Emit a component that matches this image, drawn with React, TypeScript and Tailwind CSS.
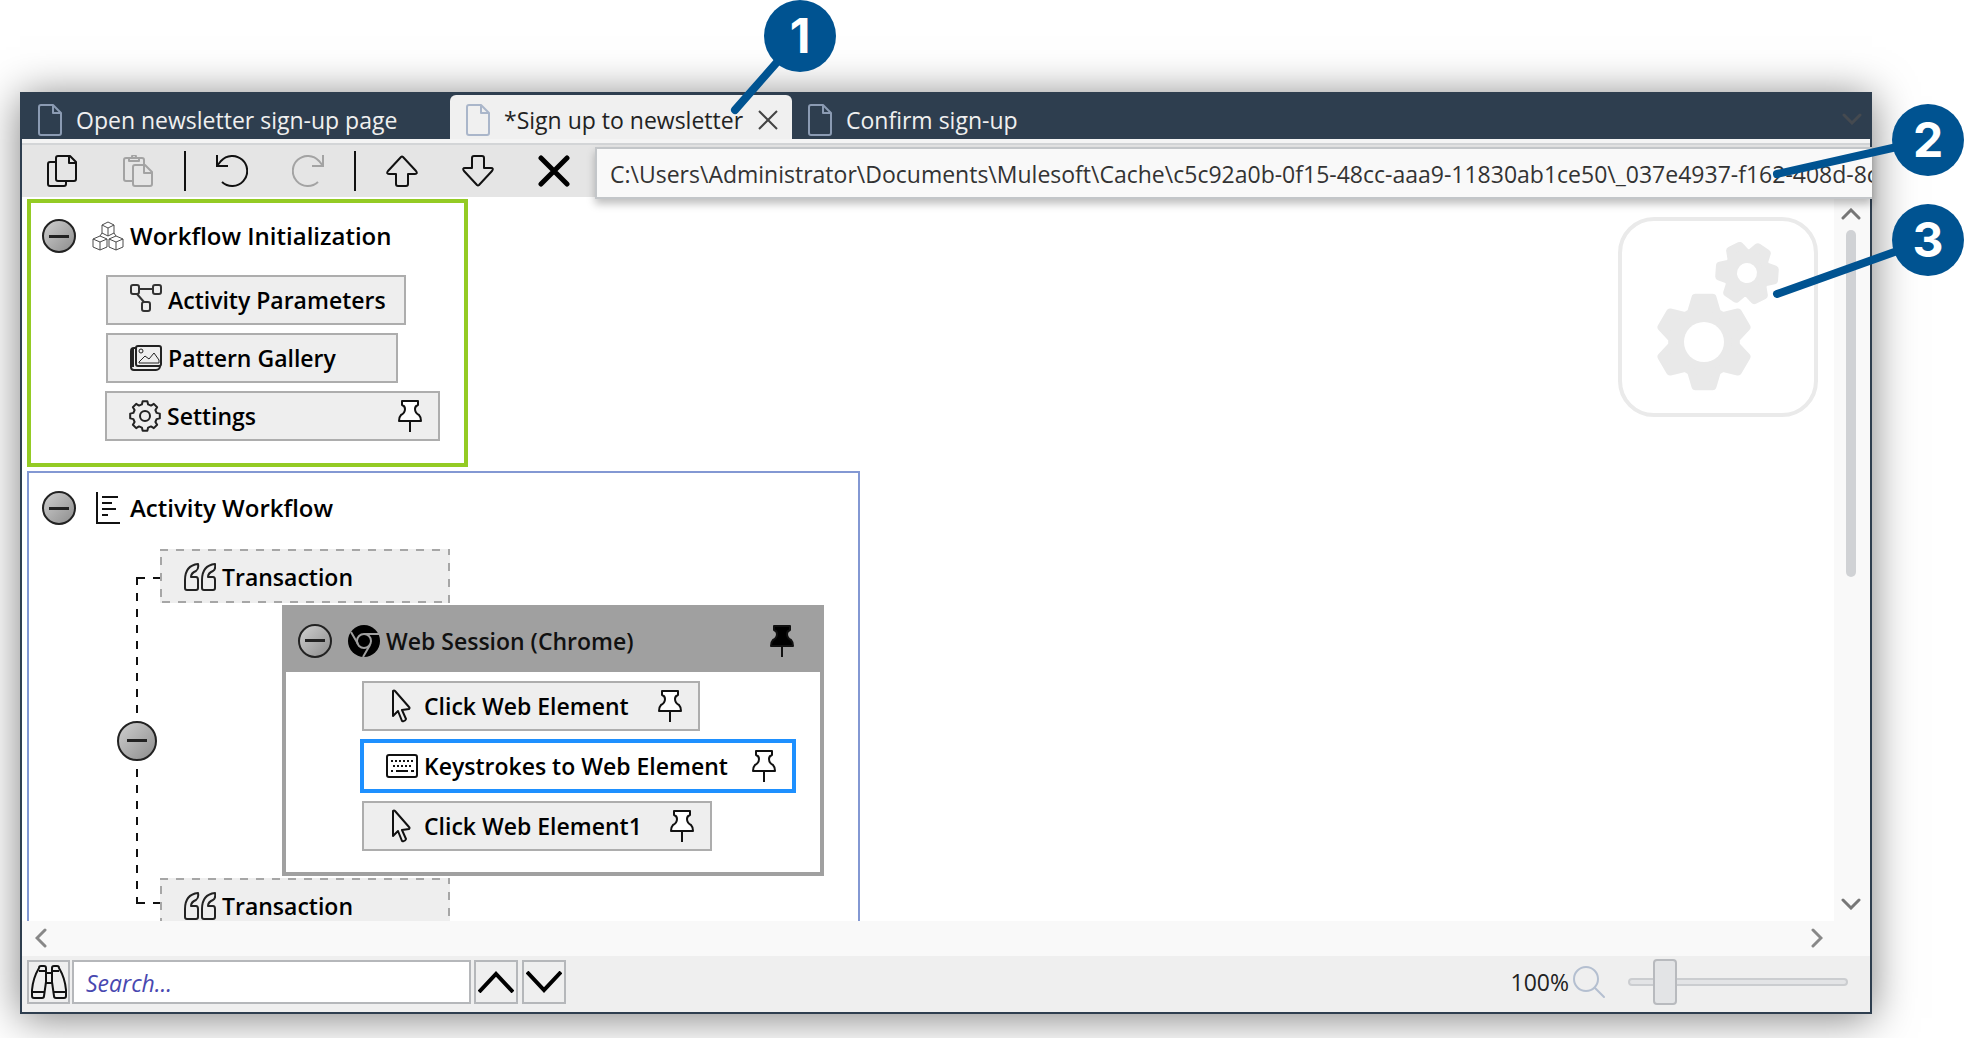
import {FC, ReactNode, useState} from 'react';

type IconProps = {className?: string};

type TabProps = {
  title: string;
  active?: boolean;
};

type StepProps = {
  label: string;
  icon: ReactNode;
  className?: string;
  pinned?: boolean;
  selected?: boolean;
};

// builds a closed gear outline around 0,0
const gearPath = (teeth: number, outer: number, inner: number, top: number, base: number) => {
  const points: string[] = [];
  for (let i = 0; i < teeth; i++) {
    const angle = (360 / teeth) * i - 90;
    [
      [angle - base, inner],
      [angle - top, outer],
      [angle + top, outer],
      [angle + base, inner],
    ].forEach(([deg, r]) => {
      const rad = (deg * Math.PI) / 180;
      points.push(`${(r * Math.cos(rad)).toFixed(2)} ${(r * Math.sin(rad)).toFixed(2)}`);
    });
  }
  return `M${points.join('L')}Z`;
};

const DocIcon: FC<IconProps> = ({className}) => (
  <svg viewBox="0 0 24 32" fill="none" strokeWidth="2" strokeLinejoin="round" className={`h-8 w-6 shrink-0 ${className}`}>
    <path d="M3 1h12l8 8v20a2 2 0 0 1-2 2H3a2 2 0 0 1-2-2V3a2 2 0 0 1 2-2zM15 1v8h8" />
  </svg>
);

const CopyIcon: FC = () => (
  <svg viewBox="0 0 30 32" fill="none" stroke="#111" strokeWidth="2" strokeLinejoin="round" className="h-8 w-[30px]">
    <path d="M9 7H3a2 2 0 0 0-2 2v20a2 2 0 0 0 2 2h14a2 2 0 0 0 2-2v-3" />
    <path d="M11 1h12l6 6v17a2 2 0 0 1-2 2H11a2 2 0 0 1-2-2V3a2 2 0 0 1 2-2zM22 1v7h7" />
  </svg>
);

const PasteIcon: FC = () => (
  <svg viewBox="0 0 30 32" fill="none" stroke="#a3a3a3" strokeWidth="2" strokeLinejoin="round" className="h-8 w-[30px]">
    <path d="M9 26H3a2 2 0 0 1-2-2V5a2 2 0 0 1 2-2h16a2 2 0 0 1 2 2v4" />
    <path d="M6 3v3h10V3M9 2a2 2 0 0 1 4 0" />
    <path d="M12 10h10l7 7v12a2 2 0 0 1-2 2H12a2 2 0 0 1-2-2V12a2 2 0 0 1 2-2zM21 10v8h8" />
  </svg>
);

const UndoIcon: FC<IconProps> = ({className}) => (
  <svg viewBox="0 0 32 32" fill="none" strokeWidth="2" className={`size-8 ${className}`}>
    <path d="M1 0v11h11M1 11L5 6A15 15 0 1 1 6 27" />
  </svg>
);

const ArrowIcon: FC<IconProps> = ({className}) => (
  <svg viewBox="0 0 32 32" fill="none" stroke="#111" strokeWidth="2" strokeLinejoin="round" className={`size-8 ${className}`}>
    <path d="M15 2q1-1 2 0l13 14q2 3-1 3h-7v10q0 2-2 2h-8q-2 0-2-2V19H3q-3 0-1-3z" />
  </svg>
);

const DeleteIcon: FC = () => (
  <svg viewBox="0 0 32 32" stroke="#000" strokeWidth="5" strokeLinecap="round" className="size-8">
    <path d="M3 3l26 26M29 3L3 29" />
  </svg>
);

const ChevronIcon: FC<IconProps> = ({className}) => (
  <svg viewBox="0 0 20 12" fill="none" strokeWidth="3" strokeLinecap="round" className={`h-3 w-5 ${className}`}>
    <path d="M2 2l8 8 8-8" />
  </svg>
);

const CubesIcon: FC = () => (
  <svg viewBox="0 0 32 30" fill="none" stroke="#4b4b4b" strokeWidth="1" strokeLinejoin="round" className="h-[30px] w-8">
    <path d="M10 4l6-3 6 3v8l-6 3-6-3zM10 4l6 3 6-3M16 7v8" />
    <path d="M1 18l7-3 7 3v8l-7 3-7-3zM1 18l7 3 7-3M8 21v8" />
    <path d="M17 18l7-3 7 3v8l-7 3-7-3zM17 18l7 3 7-3M24 21v8" />
    <path d="M10 12l-2 3M22 12l2 3" />
  </svg>
);

const NodesIcon: FC = () => (
  <svg viewBox="0 0 32 32" fill="none" stroke="#333" strokeWidth="2" className="size-8">
    <rect x="1" y="1" width="8" height="9" rx="2" />
    <rect x="23" y="1" width="8" height="9" rx="2" />
    <rect x="12" y="18" width="8" height="9" rx="2" />
    <path d="M9 5h14M7 10l7 8" />
  </svg>
);

const GalleryIcon: FC = () => (
  <svg viewBox="0 0 32 26" fill="none" stroke="#222" strokeWidth="2" strokeLinejoin="round" className="h-[26px] w-8">
    <rect x="6" y="1" width="25" height="20" rx="2" />
    <path d="M6 3H4a3 3 0 0 0-3 3v16a3 3 0 0 0 3 3h22a4 4 0 0 0 4-4M3 4v18" />
    <path d="M9 17l6-6 4 3 5-6 5 7v3H9z" strokeWidth="1" />
    <circle cx="11" cy="6" r="2" strokeWidth="1" />
  </svg>
);

const SettingsIcon: FC = () => (
  <svg viewBox="-16 -17 32 34" fill="none" stroke="#222" strokeWidth="2" strokeLinejoin="round" className="h-[34px] w-8">
    <path d={gearPath(8, 15, 12, 9, 15)} />
    <circle r="5" />
  </svg>
);

const WorkflowIcon: FC = () => (
  <svg viewBox="0 0 24 32" fill="none" stroke="#111" strokeWidth="2" className="h-8 w-6">
    <path d="M1 0v31h23M6 5h16M6 11h10M6 17h14M6 23h6" />
  </svg>
);

const QuoteIcon: FC = () => (
  <svg viewBox="0 0 32 28" fill="none" stroke="#222" strokeWidth="2" strokeLinejoin="round" className="h-7 w-8">
    <path d="M14 1C5 2 1 8 1 17v8q0 2 2 2h9q2 0 2-2v-8q0-3-2-3H7q0-4 5-6 3-2 2-7z" />
    <path d="M31 1c-9 1-13 7-13 16v8q0 2 2 2h9q2 0 2-2v-8q0-3-2-3h-5q0-4 5-6 3-2 2-7z" />
  </svg>
);

const ChromeIcon: FC = () => (
  <svg viewBox="0 0 32 32" fill="none" stroke="#a0a0a0" strokeWidth="2" className="size-8">
    <circle cx="16" cy="16" r="16" fill="#000" stroke="none" />
    <circle cx="16" cy="16" r="7" />
    <path d="M16 9h15M10 19L3 7M22 20l-7 12" />
  </svg>
);

const CursorIcon: FC = () => (
  <svg viewBox="0 0 22 34" fill="none" stroke="#111" strokeWidth="2" strokeLinejoin="round" className="h-[34px] w-[22px]">
    <path d="M2 2v25l5-5 4 10q3 1 4-2l-4-9 7-1q1-1 0-2L4 2q-1-1-2 0z" />
  </svg>
);

const KeyboardIcon: FC = () => (
  <svg viewBox="0 0 32 24" fill="none" stroke="#111" strokeWidth="2" className="h-6 w-8">
    <rect x="1" y="1" width="30" height="22" rx="2" />
    <path d="M5 7h23M7 12h20" strokeDasharray="2 2" />
    <path d="M5 17h2M10 17h12M25 17h3" />
  </svg>
);

const PinIcon: FC<{filled?: boolean}> = ({filled}) => (
  <svg viewBox="0 0 24 32" fill={filled ? '#000' : '#fff'} stroke="#111" strokeWidth="2" strokeLinejoin="round" className="h-8 w-6">
    <path d="M4 1h16v4q-3 1-3 4 0 4 4 6 2 2 2 6H1q0-4 2-6 4-2 4-6 0-3-3-4zM12 21v11" />
  </svg>
);

const BinocularsIcon: FC = () => (
  <svg viewBox="0 0 36 36" fill="none" stroke="#111" strokeWidth="2" strokeLinejoin="round" className="size-9">
    <path d="M8 4q0-2 2-2h3q2 0 2 2v14l-2 14q0 2-2 2H3q-2 0-2-2v-6q1-12 7-22zM28 4q0-2-2-2h-3q-2 0-2 2v14l2 14q0 2 2 2h8q2 0 2-2v-6q-1-12-7-22z" />
    <path d="M15 9h6M15 19h6M8 7h7M21 7h7M2 28h11M23 28h11" />
  </svg>
);

const GearsIcon: FC = () => (
  <svg viewBox="0 0 122 150" fill="#e9e9e9" stroke="#e9e9e9" strokeWidth="8" strokeLinejoin="round" className="h-[150px] w-[122px]">
    <g transform="translate(47 100)">
      <path d={gearPath(6, 45, 32, 11, 24)} />
      <circle r="20" fill="#fff" stroke="none" />
    </g>
    <g transform="translate(90 31) rotate(-26)">
      <path d={gearPath(6, 28, 20, 11, 24)} />
      <circle r="10" fill="#fff" stroke="none" />
    </g>
  </svg>
);

const CollapseButton: FC<{label: string; className?: string}> = ({label, className = 'size-[34px]'}) => (
  <button
    aria-label={`Collapse ${label}`}
    className={`flex shrink-0 items-center justify-center rounded-full border-2 border-[#222] bg-linear-to-br from-[#cfcfcf] to-[#8e8e8e] ${className}`}
  >
    <span className="h-[3px] w-5 bg-[#222]" />
  </button>
);

const Tab: FC<TabProps> = ({title, active}) => (
  <div
    className={
      active
        ? 'flex w-[342px] items-center gap-[14px] rounded-t-md bg-[#f0f0f0] pl-4 pt-[5px] text-[#222]'
        : 'flex items-center gap-[14px] pl-4 pt-[5px] text-[#f0f0f0]'
    }
  >
    <DocIcon className={active ? 'stroke-[#aab6ca]' : 'stroke-[#8b9bb3]'} />
    <button role="tab" aria-selected={!!active} className="whitespace-nowrap">
      {title}
    </button>
    {active && (
      <button aria-label="Close tab" className="ml-auto mr-[14px]">
        <svg viewBox="0 0 20 20" stroke="#444" strokeWidth="2" className="size-5">
          <path d="M1 1l18 18M19 1L1 19" />
        </svg>
      </button>
    )}
  </div>
);

const ToolButton: FC<{label: string; disabled?: boolean; children: ReactNode}> = ({label, disabled, children}) => (
  <button aria-label={label} disabled={disabled} className="flex w-[76px] items-center justify-center">
    {children}
  </button>
);

const ToolSeparator: FC = () => <span className="-mx-[15px] flex w-12 justify-center"><i className="h-10 w-[2px] bg-[#111]" /></span>;

const Step: FC<StepProps> = ({label, icon, className, pinned, selected}) => (
  <button
    className={`flex items-center whitespace-nowrap font-semibold text-black ${
      selected ? 'h-[54px] border-4 border-[#1e90ff] bg-white' : 'h-[50px] border-2 border-[#adadad] bg-[#eee]'
    } ${className}`}
  >
    <span className="mr-[6px] flex w-8 shrink-0 justify-center">{icon}</span>
    {label}
    {pinned && (
      <span className="ml-auto">
        <PinIcon />
      </span>
    )}
  </button>
);

const Transaction: FC = () => (
  <button className="relative flex h-[54px] w-[290px] items-center gap-[6px] bg-[#eee] pl-6 pt-[2px] font-semibold leading-6 text-black">
    <svg className="absolute inset-0 size-full" aria-hidden="true">
      <rect width="100%" height="100%" fill="none" stroke="#a6a6a6" strokeWidth="4" strokeDasharray="8 8" />
    </svg>
    <QuoteIcon />
    Transaction
  </button>
);

const WebSession: FC = () => (
  <section className="border-4 border-[#a0a0a0] bg-white">
    <header className="flex h-[63px] items-center bg-[#a0a0a0] pl-3 pr-[26px]">
      <CollapseButton label="Web Session" />
      <span className="ml-4">
        <ChromeIcon />
      </span>
      <h3 className="ml-[6px] font-semibold text-[#111]">Web Session (Chrome)</h3>
      <span className="ml-auto">
        <PinIcon filled />
      </span>
    </header>
    <div className="flex flex-col items-start gap-2 pb-[21px] pl-[74px] pr-6 pt-[9px]">
      <Step label="Click Web Element" icon={<CursorIcon />} pinned className="ml-[2px] w-[338px] pl-[22px] pr-4" />
      <Step label="Keystrokes to Web Element" icon={<KeyboardIcon />} pinned selected className="w-[436px] pl-[22px] pr-4" />
      <Step label="Click Web Element1" icon={<CursorIcon />} pinned className="ml-[2px] w-[350px] pl-[22px] pr-4" />
    </div>
  </section>
);

const Callout: FC<{value: number; className: string; line: ReactNode}> = ({value, className, line}) => (
  <div className={`absolute size-[72px] ${className}`}>
    <svg viewBox="0 0 72 72" stroke="#005391" strokeWidth="8" strokeLinecap="round" className="absolute inset-0 size-full overflow-visible">
      {line}
    </svg>
    <span className="relative flex size-full items-center justify-center rounded-full bg-[#005391] font-['Inter','Liberation_Sans',sans-serif] text-5xl font-bold text-white">
      {value}
    </span>
  </div>
);

const App: FC = () => {
  const [zoom, setZoom] = useState(12);

  return (
    <div className="relative flex h-screen flex-col overflow-hidden bg-white pb-6 pl-5 pr-[94px] pt-[92px] font-['Open_Sans','Noto_Sans',sans-serif] text-[23px] leading-8">
      <main className="flex min-h-0 flex-1 flex-col border-2 border-[#2e3e4f] bg-[#efefef] shadow-[0_4px_40px_rgba(0,0,0,0.5)]">
        <div role="tablist" className="flex h-[45px] shrink-0 bg-[#2e3e4f] pt-px">
          <div className="flex w-[428px]">
            <Tab title="Open newsletter sign-up page" />
          </div>
          <Tab title="*Sign up to newsletter" active />
          <Tab title="Confirm sign-up" />
          <button aria-label="Show all tabs" className="ml-auto mr-2 pt-1">
            <ChevronIcon className="stroke-[#454a50]" />
          </button>
        </div>

        <div className="relative flex h-[58px] shrink-0 border-t-4 border-[#f4f4f4] bg-[#e5e5e5]">
          <div className="flex flex-1 items-stretch border-t-2 border-[#d3d5d7] pl-[2px]">
            <ToolButton label="Copy"><CopyIcon /></ToolButton>
            <ToolButton label="Paste" disabled><PasteIcon /></ToolButton>
            <span className="flex items-center"><ToolSeparator /></span>
            <ToolButton label="Undo"><UndoIcon className="stroke-[#111]" /></ToolButton>
            <ToolButton label="Redo" disabled><UndoIcon className="-scale-x-100 stroke-[#a3a3a3]" /></ToolButton>
            <span className="flex items-center"><ToolSeparator /></span>
            <ToolButton label="Move up"><ArrowIcon /></ToolButton>
            <ToolButton label="Move down"><ArrowIcon className="rotate-180" /></ToolButton>
            <ToolButton label="Delete"><DeleteIcon /></ToolButton>
          </div>
          <div
            role="tooltip"
            className="absolute -right-[2px] left-[573px] top-1 z-10 h-[52px] overflow-hidden whitespace-nowrap border-2 border-r-0 border-[#c3c6c9] bg-[#f9f9f9] pl-[13px] pt-px leading-[48px] text-[#333] shadow-[0_5px_8px_rgba(0,0,0,0.25)]"
          >
            C:\Users\Administrator\Documents\Mulesoft\Cache\c5c92a0b-0f15-48cc-aaa9-11830ab1ce50\_037e4937-f162-408d-8c
          </div>
        </div>

        <div className="flex min-h-0 flex-1 bg-white">
          <div className="relative min-w-0 flex-1 overflow-hidden pl-[5px] pt-[2px]">
            <section className="w-fit border-4 border-[#94cb24] pb-[22px] pl-[11px] pr-6 pt-4">
              <header className="flex items-center">
                <CollapseButton label="Workflow Initialization" />
                <span className="ml-4 mr-[6px]">
                  <CubesIcon />
                </span>
                <h2 className="text-2xl font-semibold text-black">Workflow Initialization</h2>
              </header>
              <div className="ml-[63px] mt-[22px] flex flex-col gap-2">
                <Step label="Activity Parameters" icon={<NodesIcon />} className="ml-px w-[300px] pl-[22px]" />
                <Step label="Pattern Gallery" icon={<GalleryIcon />} className="ml-px w-[292px] pl-[22px]" />
                <Step label="Settings" icon={<SettingsIcon />} pinned className="w-[335px] pl-[22px] pr-4" />
              </div>
            </section>

            <section className="mt-1 w-fit border-2 border-[#8398d3] pb-6 pl-[13px] pr-[34px] pt-[18px]">
              <header className="flex items-center">
                <CollapseButton label="Activity Workflow" />
                <span className="ml-5 mr-[10px]">
                  <WorkflowIcon />
                </span>
                <h2 className="text-2xl font-semibold text-black">Activity Workflow</h2>
              </header>
              <div className="ml-[75px] mt-6 flex">
                <div className="relative my-7 flex w-[43px] items-center">
                  <svg className="absolute inset-0 size-full" stroke="#111" strokeWidth="2" strokeDasharray="8 8" aria-hidden="true">
                    <line x1="20" y1="1" x2="100%" y2="1" />
                    <line x1="20" y1="0" x2="20" y2="100%" />
                    <line x1="20" y1="100%" x2="100%" y2="100%" strokeWidth="4" />
                  </svg>
                  <CollapseButton label="Transaction" className="relative size-10" />
                </div>
                <div>
                  <Transaction />
                  <div className="mb-[2px] ml-[122px] mt-[2px]">
                    <WebSession />
                  </div>
                  <Transaction />
                </div>
              </div>
            </section>

            <div className="absolute right-4 top-5 flex size-[200px] items-center justify-center rounded-[36px] border-4 border-[#eaeaea] bg-white">
              <GearsIcon />
            </div>
          </div>

          <div className="flex w-9 flex-col items-center bg-[#f9f9f9] pb-[11px] pr-[2px] pt-[11px]">
            <ChevronIcon className="rotate-180 stroke-[#777]" />
            <div className="mt-[10px] flex-1">
              <div className="h-[52%] w-[10px] rounded-full bg-[#d0d2d5]" />
            </div>
            <ChevronIcon className="stroke-[#777]" />
          </div>
        </div>

        <div className="flex h-[35px] shrink-0 items-center justify-between bg-[#f9f9f9] pb-px pl-[9px] pr-[43px]">
          <ChevronIcon className="rotate-90 stroke-[#888]" />
          <ChevronIcon className="-rotate-90 stroke-[#888]" />
        </div>

        <footer className="flex h-14 shrink-0 items-center pb-1 pl-[5px] pr-[22px]">
          <button aria-label="Find" className="flex h-11 w-[43px] items-center justify-center border-2 border-[#b5b7ba]">
            <BinocularsIcon />
          </button>
          <input
            type="text"
            aria-label="Search"
            placeholder="Search..."
            className="ml-[2px] h-11 w-[399px] border-2 border-[#b5b7ba] bg-white pl-3 pt-[2px] italic placeholder:text-[#4848b0]"
          />
          <button aria-label="Previous match" className="ml-[3px] flex size-11 items-center justify-center border-2 border-[#b5b7ba]">
            <svg viewBox="0 0 36 22" fill="none" stroke="#000" strokeWidth="4" className="h-[22px] w-9">
              <path d="M1 21L18 3l17 18" />
            </svg>
          </button>
          <button aria-label="Next match" className="ml-1 flex size-11 items-center justify-center border-2 border-[#b5b7ba]">
            <svg viewBox="0 0 36 22" fill="none" stroke="#000" strokeWidth="4" className="h-[22px] w-9">
              <path d="M1 1l17 18L35 1" />
            </svg>
          </button>
          <label htmlFor="zoom" className="ml-auto flex items-center gap-[3px] text-[#222]">
            100%
            <svg viewBox="0 0 34 34" fill="none" stroke="#b4bfd0" strokeWidth="2" strokeLinecap="round" className="size-[34px]">
              <circle cx="14" cy="14" r="12" />
              <path d="M23 23l9 9" />
            </svg>
          </label>
          <input
            id="zoom"
            type="range"
            value={zoom}
            onChange={(e) => setZoom(Number(e.target.value))}
            className="ml-[22px] h-[46px] w-[220px] appearance-none bg-transparent [&::-webkit-slider-runnable-track]:h-2 [&::-webkit-slider-runnable-track]:rounded-full [&::-webkit-slider-runnable-track]:border-2 [&::-webkit-slider-runnable-track]:border-[#cbcdd0] [&::-webkit-slider-runnable-track]:bg-[#e3e4e6] [&::-webkit-slider-thumb]:-mt-[21px] [&::-webkit-slider-thumb]:h-[46px] [&::-webkit-slider-thumb]:w-6 [&::-webkit-slider-thumb]:appearance-none [&::-webkit-slider-thumb]:rounded [&::-webkit-slider-thumb]:border-2 [&::-webkit-slider-thumb]:border-[#b8babe] [&::-webkit-slider-thumb]:bg-[#e3e4e6]"
          />
        </footer>
      </main>

      <Callout value={1} className="left-[764px] top-0 z-20" line={<path d="M36 36L-29 110" />} />
      <Callout value={2} className="right-[2px] top-[104px] z-20" line={<path d="M36 36L-115 70" />} />
      <Callout value={3} className="right-[2px] top-[204px] z-20" line={<path d="M36 36L-115 90" />} />
    </div>
  );
};

export default App;
